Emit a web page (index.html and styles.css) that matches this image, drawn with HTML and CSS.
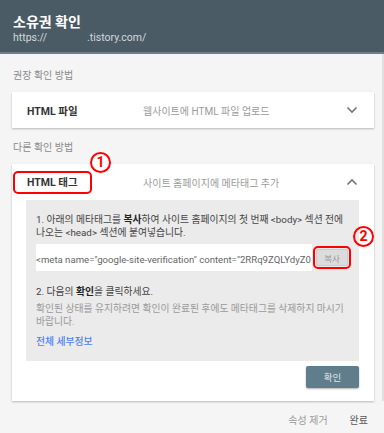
FILE: index.html
```html
<!DOCTYPE html>
<html lang="ko">
  <head>
    <meta charset="UTF-8" />
    <meta name="viewport" content="width=device-width, initial-scale=1.0" />
    <title>소유권 확인</title>
    <link rel="stylesheet" href="styles.css">
  </head>
  <body>
    <div class="dialog">
      <div class="header">
        <h1>소유권 확인</h1>
        <div class="url">https://<span class="gap"></span>.tistory.com/</div>
      </div>
      <div class="content">
        <div class="label">권장 확인 방법</div>
        <div class="card">
          <div class="card-head">
            <span class="method">HTML 파일</span>
            <span class="desc">웹사이트에 HTML 파일 업로드</span>
            <svg class="chev" width="12" height="8" viewBox="0 0 12 8"><path d="M1.5 1.5 L6 6 L10.5 1.5" fill="none" stroke="#757575" stroke-width="1.6"/></svg>
          </div>
        </div>
        <div class="label">다른 확인 방법</div>
        <div class="card open">
          <div class="card-head">
            <span class="method"><span class="marked">HTML 태그</span></span>
            <span class="desc">사이트 홈페이지에 메타태그 추가</span>
            <svg class="chev" width="12" height="8" viewBox="0 0 12 8"><path d="M1.5 6.5 L6 2 L10.5 6.5" fill="none" stroke="#757575" stroke-width="1.6"/></svg>
          </div>
          <span class="num num1">1</span>
          <div class="panel">
            <p class="step">1. 아래의 메타태그를 <b>복사</b>하여 사이트 홈페이지의 첫 번째 &lt;body&gt; 섹션 전에<br><span>나오는 &lt;head&gt; 섹션에 붙여넣습니다.</span></p>
            <div class="code-row">
              <div class="code">&lt;meta name="google-site-verification" content="2RRq9ZQLYdyZ0</div>
              <button class="copy">복사</button>
              <span class="num num2">2</span>
            </div>
            <p class="step">2. 다음의 <b>확인</b>을 클릭하세요.</p>
            <p class="note">확인된 상태를 유지하려면 확인이 완료된 후에도 메타태그를 삭제하지 마시기 바랍니다.</p>
            <a class="more" href="#">전체 세부정보</a>
          </div>
          <div class="actions">
            <button class="verify">확인</button>
          </div>
        </div>
      </div>
      <div class="footer">
        <span class="remove">속성 제거</span>
        <span class="done">완료</span>
      </div>
    </div>
  </body>
</html>
```

FILE: styles.css
```css
body {
  margin: 0;
  padding: 0;
  font-family: Roboto, "Noto Sans CJK KR", sans-serif;
  background: #f5f5f5;
}

.dialog {
  width: 384px;
  height: 433px;
  overflow: hidden;
  background: #f5f5f5;
}

.header {
  background: #4a5b65;
  height: 54px;
  border-bottom: 2px solid #6d7f89;
  padding: 14px 0 0 13px;
  box-sizing: border-box;
}

.header h1 {
  margin: 0;
  font-size: 14px;
  line-height: 17px;
  font-weight: 700;
  color: #fff;
}

.url {
  font-size: 10.5px;
  line-height: 13px;
  color: #d2d8dc;
}

.url .gap {
  display: inline-block;
  width: 40px;
}

.content {
  padding: 15px 8px 0 12px;
  border-right: 2px solid #e0e0e0;
}

.label {
  font-size: 10px;
  color: #8a8a8a;
  line-height: 14px;
  padding-left: 1px;
  margin-bottom: 9px;
}

.card {
  background: #fff;
  box-shadow: 0 1px 2px rgba(0, 0, 0, 0.25);
  margin-bottom: 13px;
  position: relative;
}

.card.open {
  margin-bottom: 0;
}

.card-head {
  display: flex;
  align-items: center;
  height: 36px;
  padding: 0 16px 0 15px;
}

.method {
  width: 116px;
  font-size: 10.5px;
  font-weight: 700;
  color: #333;
}

.desc {
  flex: 1;
  font-size: 10px;
  color: #9a9a9a;
}

.marked {
  display: inline-block;
  margin-left: -14px;
  padding: 0 12px;
  height: 19px;
  line-height: 19px;
  border: 2px solid #f00;
  border-radius: 5px;
}

.num {
  position: absolute;
  width: 17px;
  height: 17px;
  border: 2px solid #f00;
  border-radius: 50%;
  color: #f00;
  font-weight: 700;
  font-size: 14px;
  line-height: 17px;
  text-align: center;
}

.num1 {
  left: 78px;
  top: -12px;
  background: #fff;
}

.panel {
  margin: 0 15px 0 14px;
  background: #ebebeb;
  padding: 13px 10px 13px 10px;
}

.step {
  margin: 0;
  font-size: 9.8px;
  line-height: 13px;
  color: #444;
  word-break: keep-all;
}

.step b {
  color: #222;
}

.code-row {
  display: flex;
  align-items: center;
  position: relative;
  margin: 5px 0 14px;
}

.code {
  width: 276px;
  height: 27px;
  background: #fff;
  font-size: 9.6px;
  line-height: 32px;
  color: #666;
  white-space: nowrap;
  overflow: hidden;
}

.copy {
  margin-left: 4px;
  width: 32px;
  height: 17px;
  padding: 0;
  background: #dcdcdc;
  border: 1px solid #ccc;
  border-radius: 2px;
  font-family: inherit;
  font-size: 8.5px;
  color: #999;
  outline: 2px solid #f00;
  outline-offset: 1px;
}

.num2 {
  left: 317px;
  top: -18px;
}

.note {
  margin: 4px 0 0;
  font-size: 9.8px;
  line-height: 13px;
  color: #9a9a9a;
  word-break: keep-all;
}

.more {
  display: block;
  margin-top: 7px;
  font-size: 9.8px;
  line-height: 13px;
  color: #4f7ff0;
  text-decoration: none;
  font-weight: 500;
}

.actions {
  display: flex;
  justify-content: flex-end;
  padding: 5px 15px 13px 0;
}

.verify {
  width: 53px;
  height: 22px;
  padding: 0;
  background: #607d8b;
  border: none;
  border-radius: 2px;
  box-shadow: 0 1px 2px rgba(0, 0, 0, 0.3);
  color: #dfe7eb;
  font-family: inherit;
  font-size: 9.5px;
}

.footer {
  display: flex;
  justify-content: flex-end;
  align-items: center;
  gap: 22px;
  height: 36px;
  padding-right: 16px;
  font-size: 10px;
}

.remove {
  color: #999;
}

.done {
  color: #555;
}
```
